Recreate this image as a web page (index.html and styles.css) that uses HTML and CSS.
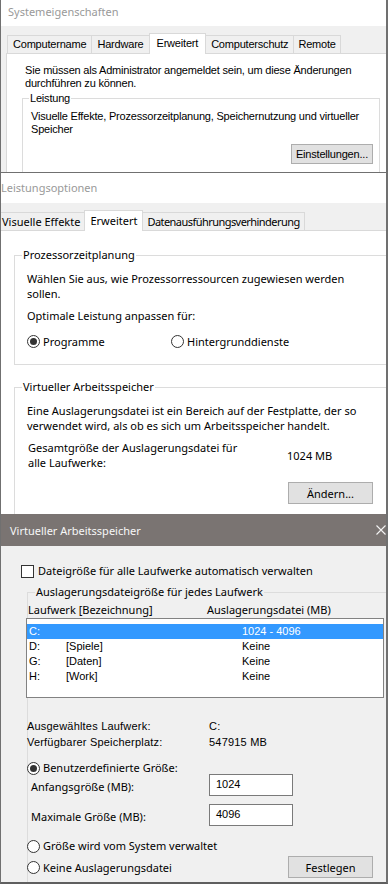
FILE: index.html
```html
<!doctype html>
<html lang="de">
<head>
    <meta charset="UTF-8">
    <title>Virtueller Arbeitsspeicher</title>
    <link rel="stylesheet" href="styles.css">
</head>
<body>
    <!--Systemeigenschaften-->
    <div class="win win-sys">
        <div class="titlebar">Systemeigenschaften</div>
        <div class="tabs">
            <span class="tab">Computername</span>
            <span class="tab">Hardware</span>
            <span class="tab active">Erweitert</span>
            <span class="tab">Computerschutz</span>
            <span class="tab">Remote</span>
        </div>
        <div class="page">
            <p class="intro">Sie müssen als Administrator angemeldet sein, um diese Änderungen<br>durchführen zu können.</p>
            <fieldset class="group">
                <legend>Leistung</legend>
                <p>Visuelle Effekte, Prozessorzeitplanung, Speichernutzung und virtueller<br>Speicher</p>
                <div class="actions"><button class="btn">Einstellungen...</button></div>
            </fieldset>
        </div>
    </div>

    <!--Leistungsoptionen-->
    <div class="win win-perf">
        <div class="titlebar">Leistungsoptionen</div>
        <div class="tabs">
            <span class="tab">Visuelle Effekte</span>
            <span class="tab active">Erweitert</span>
            <span class="tab long">Datenausführungsverhinderung</span>
        </div>
        <div class="page">
            <fieldset class="group cpu">
                <legend>Prozessorzeitplanung</legend>
                <p>Wählen Sie aus, wie Prozessorressourcen zugewiesen werden<br>sollen.</p>
                <p class="sub">Optimale Leistung anpassen für:</p>
                <div class="radios">
                    <label class="radio first"><span class="dot on"></span>Programme</label>
                    <label class="radio"><span class="dot"></span>Hintergrunddienste</label>
                </div>
            </fieldset>
            <fieldset class="group mem">
                <legend>Virtueller Arbeitsspeicher</legend>
                <p>Eine Auslagerungsdatei ist ein Bereich auf der Festplatte, der so<br>verwendet wird, als ob es sich um Arbeitsspeicher handelt.</p>
                <div class="total">
                    <span class="total-label">Gesamtgröße der Auslagerungsdatei für<br>alle Laufwerke:</span>
                    <span>1024 MB</span>
                </div>
                <div class="actions"><button class="btn">Ändern...</button></div>
            </fieldset>
        </div>
    </div>

    <!--Virtueller Arbeitsspeicher-->
    <div class="win win-vm">
        <div class="titlebar">
            <span>Virtueller Arbeitsspeicher</span>
            <svg class="close" width="10" height="10" viewBox="0 0 10 10"><path d="M0.5 0.5L9.5 9.5M9.5 0.5L0.5 9.5" stroke="#f4f4f4" stroke-width="1.1" fill="none"/></svg>
        </div>
        <div class="body">
            <label class="check"><span class="box"></span>Dateigröße für alle Laufwerke automatisch verwalten</label>
            <fieldset class="group drives">
                <legend>Auslagerungsdateigröße für jedes Laufwerk</legend>
                <div class="cols">
                    <span>Laufwerk [Bezeichnung]</span>
                    <span>Auslagerungsdatei (MB)</span>
                </div>
                <div class="list">
                    <div class="row sel"><span>C:</span><span></span><span>1024 - 4096</span></div>
                    <div class="row"><span>D:</span><span>[Spiele]</span><span>Keine</span></div>
                    <div class="row"><span>G:</span><span>[Daten]</span><span>Keine</span></div>
                    <div class="row"><span>H:</span><span>[Work]</span><span>Keine</span></div>
                </div>
                <div class="info">
                    <span>Ausgewähltes Laufwerk:</span><span>C:</span>
                    <span>Verfügbarer Speicherplatz:</span><span>547915 MB</span>
                </div>
                <label class="radio custom"><span class="dot on"></span>Benutzerdefinierte Größe:</label>
                <div class="field">
                    <span class="field-label">Anfangsgröße (MB):</span>
                    <span class="input">1024</span>
                </div>
                <div class="field second">
                    <span class="field-label">Maximale Größe (MB):</span>
                    <span class="input">4096</span>
                </div>
                <label class="radio sys"><span class="dot"></span>Größe wird vom System verwaltet</label>
                <div class="last">
                    <label class="radio"><span class="dot"></span>Keine Auslagerungsdatei</label>
                    <button class="btn">Festlegen</button>
                </div>
            </fieldset>
        </div>
    </div>
</body>
</html>
```

FILE: styles.css
```css
body{
    margin: 0;
    width: 388px;
    background: #f0f0f0;
    color: #000;
    font-family: "Noto Sans", sans-serif;
    font-size: 11px;
}
p{
    margin: 0;
    white-space: nowrap;
}
button{
    font: inherit;
    color: inherit;
    letter-spacing: inherit;
    padding: 0;
}

/*Fenster*/
.win{
    box-sizing: border-box;
    display: flex;
    flex-direction: column;
    overflow: hidden;
    background: #f0f0f0;
    border-left: 1px solid #707070;
    border-right: 2px solid #707070;
}
.titlebar{
    flex: none;
    background: #fff;
    color: #999;
    white-space: nowrap;
}

/*Reiter*/
.tabs{
    flex: none;
    display: flex;
    align-items: flex-end;
}
.tab{
    box-sizing: border-box;
    height: 18px;
    line-height: 17px;
    padding: 0 5px;
    margin-right: -1px;
    border: 1px solid #d9d9d9;
    border-bottom: none;
    background: #f0f0f0;
    white-space: nowrap;
}
.tab.active{
    position: relative;
    z-index: 1;
    height: 21px;
    line-height: 19px;
    margin-bottom: -1px;
    padding: 0 7px;
    background: #fff;
}
.page{
    flex: 1;
    background: #fff;
    border-top: 1px solid #d9d9d9;
}

/*Gruppenrahmen*/
.group{
    margin: 0;
    padding: 0;
    min-width: 0;
    border: 1px solid #dcdcdc;
}
.group > legend{
    padding: 0 1px;
}

/*Schaltflaeche*/
.btn{
    box-sizing: border-box;
    display: block;
    height: 22px;
    background: #e1e1e1;
    border: 1px solid #adadad;
}

/*Optionsfeld*/
.radio{
    display: flex;
    align-items: center;
    gap: 3px;
    white-space: nowrap;
}
.dot{
    box-sizing: border-box;
    flex: none;
    display: grid;
    place-items: center;
    width: 13px;
    height: 13px;
    border: 1px solid #333;
    border-radius: 50%;
    background: #fff;
}
.dot.on::after{
    content: "";
    width: 7px;
    height: 7px;
    border-radius: 50%;
    background: #333;
}

/* ---------- Systemeigenschaften ---------- */
.win-sys{
    height: 172px;
    font-family: "Liberation Sans", Arial, sans-serif;
    letter-spacing: -0.2px;
}
.win-sys .titlebar{
    height: 26px;
    line-height: 23px;
    padding-left: 7px;
    font-family: "Noto Sans", sans-serif;
    letter-spacing: 0;
}
.win-sys .tabs{
    height: 27px;
    padding-left: 6px;
}
.win-sys .tab:last-child{
    padding: 0 4px;
}
.win-sys .page{
    margin-left: 5px;
    border-left: 1px solid #d9d9d9;
}
.intro{
    padding: 10px 0 0 18px;
    line-height: 13px;
}
.win-sys .group{
    margin: 2px 6px 0 15px;
    padding-left: 8px;
    height: 120px;
}
.win-sys .group > legend{
    margin-left: -2px;
    line-height: 13px;
}
.win-sys .group > p{
    margin-top: 5px;
    line-height: 13px;
}
.win-sys .actions{
    display: flex;
    justify-content: flex-end;
    margin-top: 8px;
    padding-right: 6px;
}
.win-sys .btn{
    width: 82px;
    height: 20px;
}

/* ---------- Leistungsoptionen ---------- */
.win-perf{
    height: 342px;
    border-top: 1px solid #707070;
}
.win-perf .titlebar{
    height: 30px;
    line-height: 30px;
}
.win-perf .tabs{
    height: 27px;
    margin-left: -4px;
}
.win-perf .tab{
    padding: 0 4px;
}
.win-perf .tab.active{
    padding: 0 5px;
}
.win-perf .tab.long{
    letter-spacing: -0.55px;
}
.win-perf .group{
    margin: 0 -30px 0 13px;
    padding: 0 0 0 12px;
}
.win-perf .group > legend{
    margin-left: -5px;
    line-height: 16px;
}
.win-perf .group > p{
    margin-top: 8px;
    line-height: 15px;
}
.win-perf .group > p.sub{
    margin-top: 7px;
}
.cpu{
    margin-top: 16px !important;
    padding-bottom: 15px !important;
}
.mem{
    margin-top: 14px !important;
    height: 200px;
}
.radios{
    display: flex;
    margin-top: 11px;
    line-height: 15px;
}
.radio.first{
    width: 144px;
}
.total{
    display: flex;
    align-items: center;
    margin-top: 7px;
    padding-left: 1px;
    line-height: 15px;
}
.total-label{
    width: 259px;
}
.win-perf .actions{
    margin-top: 12px;
    padding-left: 261px;
}
.win-perf .btn{
    width: 85px;
}

/* ---------- Virtueller Arbeitsspeicher ---------- */
.win-vm{
    height: 370px;
    border-bottom: 2px solid #5f5f5f;
}
.win-vm .titlebar{
    display: flex;
    justify-content: space-between;
    align-items: center;
    height: 32px;
    padding-left: 9px;
    background: #7a7472;
    color: #f7f7f7;
}
.win-vm .body{
    flex: 1;
    overflow: hidden;
}
.check{
    display: flex;
    align-items: center;
    gap: 4px;
    margin: 17px 0 0 20px;
    line-height: 16px;
    white-space: nowrap;
}
.box{
    box-sizing: border-box;
    width: 13px;
    height: 13px;
    border: 1px solid #333;
    background: #fff;
}
.drives{
    margin: 5px -30px 0 26px !important;
    padding-bottom: 20px !important;
}
.drives > legend{
    margin-left: 7px;
    line-height: 16px;
}
.cols{
    display: grid;
    grid-template-columns: 179px auto;
    margin-top: 2px;
    line-height: 16px;
}
.list{
    box-sizing: border-box;
    width: 358px;
    height: 80px;
    margin-left: -2px;
    padding-top: 5px;
    background: #fff;
    border: 1px solid #828282;
    font-family: "Liberation Sans", Arial, sans-serif;
}
.row{
    display: grid;
    grid-template-columns: 37px 176px auto;
    height: 15px;
    line-height: 15px;
    padding-left: 2px;
}
.row.sel{
    background: #3399ff;
    color: #fff;
}
.info{
    display: grid;
    grid-template-columns: 182px auto;
    margin: 20px 0 0 -1px;
    line-height: 16px;
    font-family: "Liberation Sans", Arial, sans-serif;
    letter-spacing: 0.2px;
}
.radio.custom{
    margin: 10px 0 0 -1px;
    line-height: 16px;
}
.field{
    display: flex;
    align-items: center;
    height: 22px;
    margin-top: -2px;
    padding-left: 3px;
}
.field.second{
    margin-top: 8px;
}
.field-label{
    width: 178px;
    margin-top: 4px;
    line-height: 16px;
}
.input{
    box-sizing: border-box;
    width: 84px;
    height: 22px;
    padding-left: 6px;
    line-height: 19px;
    background: #fff;
    border: 1px solid #7a7a7a;
    font-family: "Liberation Sans", Arial, sans-serif;
}
.radio.sys{
    margin: 12px 0 0 -1px;
    line-height: 16px;
}
.last{
    display: grid;
    grid-template-columns: 260px 85px;
    align-items: center;
    height: 22px;
    margin-top: 2px;
}
.last .radio{
    margin-left: -1px;
}
```
